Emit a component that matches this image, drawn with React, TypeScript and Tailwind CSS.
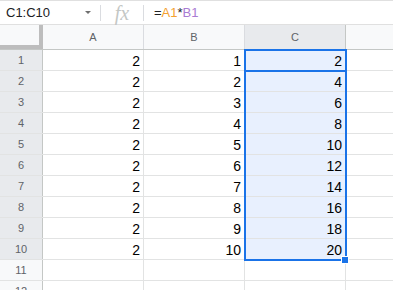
import React from "react";

const rows = [
  [2, 1, 2],
  [2, 2, 4],
  [2, 3, 6],
  [2, 4, 8],
  [2, 5, 10],
  [2, 6, 12],
  [2, 7, 14],
  [2, 8, 16],
  [2, 9, 18],
  [2, 10, 20],
];

function Cell({ v, sel, last }: { v?: number; sel?: boolean; last?: boolean }) {
  return (
    <div
      className={
        (last ? "flex-1 " : "w-[101px] border-r ") +
        "h-full border-[#e2e3e3] flex items-end justify-end pr-[3px] pb-[1px] text-[14px] leading-[16px] text-black " +
        (sel ? "bg-[#e8f0fe]" : "bg-white")
      }
    >
      {v !== undefined ? v : ""}
    </div>
  );
}

export default function App() {
  return (
    <div
      className="w-[393px] h-[290px] overflow-hidden bg-white relative"
      style={{ fontFamily: '"Liberation Sans", Arial, sans-serif' }}
    >
      {/* Formula bar */}
      <div className="h-[25px] flex items-center border-t border-b border-[#e0e0e0]">
        <div className="w-[100px] h-full flex items-center justify-between pl-[6px] pr-[9px]">
          <span className="text-[13px] text-[#202124] leading-none">C1:C10</span>
          <svg width="6" height="3" viewBox="0 0 6 3">
            <polygon points="0,0 6,0 3,3" fill="#6f6f6f" />
          </svg>
        </div>
        <div className="w-px h-[16px] bg-[#dadce0]" />
        <div className="w-[42px] h-full flex items-center justify-center">
          <span
            className="italic text-[20px] text-[#c4c7c5] leading-none"
            style={{ fontFamily: '"Liberation Serif", "Times New Roman", serif' }}
          >
            fx
          </span>
        </div>
        <div className="w-px h-[16px] bg-[#dadce0]" />
        <div className="pl-[10px] text-[13px] leading-none text-[#202124]">
          =<span className="text-[#f4a130]">A1</span>*<span className="text-[#a97bd3]">B1</span>
        </div>
      </div>

      {/* Column headers */}
      <div className="h-[25px] flex border-b border-[#c4c7c5] text-[11px] text-[#5f6368]">
        <div className="w-[43px] h-full bg-[#f8f9fa] border-r-4 border-b-4 border-[#bdbdbd]" />
        <div className="w-[101px] h-full bg-[#f8f9fa] border-r border-[#dadce0] flex items-center justify-center">A</div>
        <div className="w-[101px] h-full bg-[#f8f9fa] border-r border-[#dadce0] flex items-center justify-center">B</div>
        <div className="w-[101px] h-full bg-[#e8eaed] border-r border-[#c4c7c5] flex items-center justify-center">C</div>
        <div className="flex-1 h-full bg-[#f8f9fa]" />
      </div>

      {/* Rows */}
      {rows.map((r, i) => (
        <div key={i} className="h-[21px] flex border-b border-[#e2e3e3]">
          <div className="w-[43px] h-full bg-[#e8eaed] border-r border-[#c4c7c5] flex items-center justify-center text-[11px] text-[#5f6368]">
            {i + 1}
          </div>
          <Cell v={r[0]} />
          <Cell v={r[1]} />
          <Cell v={r[2]} sel />
          <Cell last />
        </div>
      ))}
      {[11, 12].map((n) => (
        <div key={n} className="h-[21px] flex border-b border-[#e2e3e3]">
          <div className="w-[43px] h-full bg-[#f8f9fa] border-r border-[#c4c7c5] flex items-center justify-center text-[11px] text-[#5f6368]">
            {n}
          </div>
          <Cell />
          <Cell />
          <Cell />
          <Cell last />
        </div>
      ))}

      {/* Selection overlay */}
      <div className="absolute left-[244px] top-[49px] w-[103px] h-[212px] border-2 border-[#1a73e8] pointer-events-none" />
      <div className="absolute left-[244px] top-[49px] w-[103px] h-[23px] border-2 border-[#1a73e8] pointer-events-none" />
      <div className="absolute left-[341px] top-[256px] w-[8px] h-[8px] bg-[#1a73e8] border border-white" />
    </div>
  );
}
